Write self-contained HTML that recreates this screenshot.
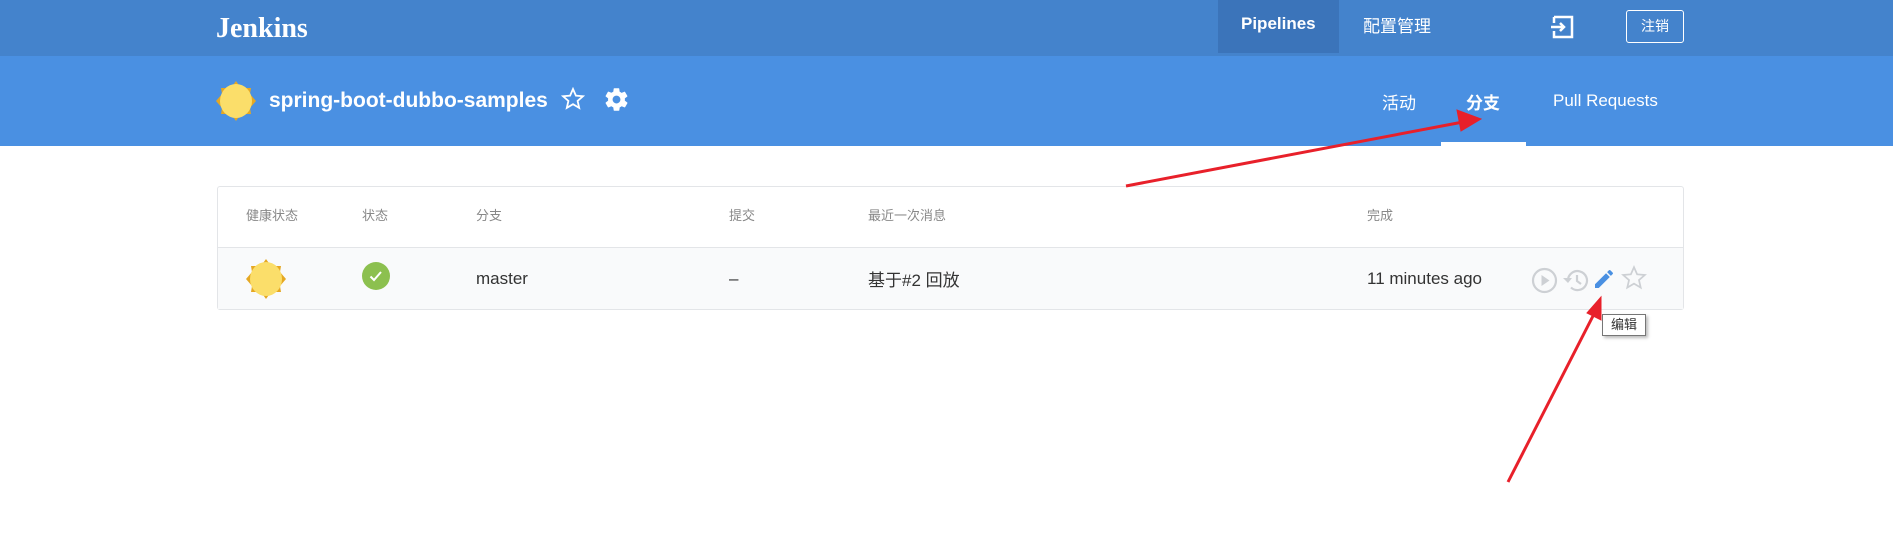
<!DOCTYPE html>
<html><head><meta charset="utf-8"><style>
*{margin:0;padding:0;box-sizing:border-box}
body{width:1893px;height:552px;background:#fff;font-family:"Liberation Sans","Noto Sans CJK SC",sans-serif;position:relative;overflow:hidden}
.a{position:absolute;white-space:nowrap}
#top{position:absolute;left:0;top:0;width:1893px;height:56px;background:#4483cc}
#sub{position:absolute;left:0;top:56px;width:1893px;height:90px;background:#4a90e2}
.h{color:#888;font-size:13px;top:205px}
.r{color:#333;font-size:17px;top:269px}
</style></head><body>
<div id="top"></div><div id="sub"></div>
<div class="a" style="left:216px;top:13px;color:#fff;font-family:'Liberation Serif',serif;font-weight:bold;font-size:28px">Jenkins</div>
<div class="a" style="left:1218px;top:0;width:121px;height:53px;background:#3b74ba"></div>
<div class="a" style="left:1241px;top:14px;color:#fff;font-weight:bold;font-size:17px">Pipelines</div>
<div class="a" style="left:1363px;top:12px;color:#fff;font-size:17px">配置管理</div>
<svg class="a" style="left:1550px;top:14px" width="26" height="26" viewBox="0 0 26 26" fill="none" stroke="#fff" stroke-width="2.5"><path d="M4 3h18v20H4V17M4 9V3M1 13h13M10 9l4 4-4 4"/></svg>
<div class="a" style="left:1626px;top:10px;width:58px;height:33px;border:1px solid #fff;border-radius:3px;color:#fff;font-size:14px;text-align:center;line-height:31px">注销</div>
<svg class="a" style="left:216px;top:81px" width="40" height="40" viewBox="0 0 40 40"><polygon points="20,0 25,7 35,7 34,13 40,20 34,27 35,33 25,33 20,40 15,33 5,33 6,27 0,20 6,13 5,7 15,7" fill="#e5a823"/><ellipse cx="20" cy="20" rx="16" ry="17" fill="#fbde6a"/></svg>
<div class="a" style="left:269px;top:89px;color:#fff;font-weight:bold;font-size:21px">spring-boot-dubbo-samples</div>
<svg class="a" style="left:561px;top:87px" width="24" height="24" viewBox="0 0 24 24" fill="none" stroke="#fff" stroke-width="1.8"><path d="M12 2l2.9 6.6 7.1.6-5.4 4.7 1.6 7L12 17.2 5.8 20.9l1.6-7L2 9.2l7.1-.6z"/></svg>
<svg class="a" style="left:603px;top:86px" width="27" height="27" viewBox="0 0 24 24"><path fill="#fff" d="M19.4 13c.04-.3.06-.6.06-1s-.02-.7-.06-1l2.1-1.6c.2-.15.24-.42.12-.64l-2-3.46c-.12-.22-.39-.3-.61-.22l-2.5 1c-.52-.4-1.08-.73-1.69-.98l-.38-2.65A.49.49 0 0 0 14 2h-4c-.25 0-.46.18-.49.42l-.38 2.65c-.61.25-1.17.59-1.69.98l-2.5-1c-.23-.09-.49 0-.61.22l-2 3.46c-.13.22-.07.49.12.64L4.57 11c-.04.3-.07.6-.07 1s.03.7.07 1l-2.11 1.65c-.19.15-.24.42-.12.64l2 3.46c.12.22.39.3.61.22l2.5-1c.52.4 1.08.73 1.69.98l.38 2.65c.03.24.24.42.49.42h4c.25 0 .46-.18.49-.42l.38-2.65c.61-.25 1.17-.59 1.69-.98l2.5 1c.23.09.49 0 .61-.22l2-3.46c.12-.22.07-.49-.12-.64L19.4 13zM12 15.5A3.5 3.5 0 1 1 12 8.5a3.5 3.5 0 0 1 0 7z"/></svg>
<div class="a" style="left:1382px;top:89px;color:#fff;font-size:17px">活动</div>
<div class="a" style="left:1466px;top:89px;color:#fff;font-size:17px;font-weight:bold">分支</div>
<div class="a" style="left:1553px;top:91px;color:#fff;font-size:17px">Pull Requests</div>
<div class="a" style="left:1441px;top:142px;width:85px;height:4px;background:#fff"></div>
<div class="a" style="left:217px;top:186px;width:1467px;height:124px;border:1px solid #e3e5e8;border-radius:3px;background:#fff"></div>
<div class="a" style="left:218px;top:247px;width:1465px;height:62px;background:#f9fafb;border-top:1px solid #e3e5e8"></div>
<div class="a h" style="left:246px">健康状态</div>
<div class="a h" style="left:362px">状态</div>
<div class="a h" style="left:476px">分支</div>
<div class="a h" style="left:729px">提交</div>
<div class="a h" style="left:868px">最近一次消息</div>
<div class="a h" style="left:1367px">完成</div>
<svg class="a" style="left:246px;top:259px" width="40" height="40" viewBox="0 0 40 40"><polygon points="20,0 25,7 35,7 34,13 40,20 34,27 35,33 25,33 20,40 15,33 5,33 6,27 0,20 6,13 5,7 15,7" fill="#e5a823"/><ellipse cx="20" cy="20" rx="16" ry="17" fill="#fbde6a"/></svg>
<svg class="a" style="left:362px;top:262px" width="28" height="28" viewBox="0 0 28 28"><circle cx="14" cy="14" r="14" fill="#8cc04f"/><path d="M8.5 14.5l3.5 3.5 7-8" fill="none" stroke="#fff" stroke-width="2"/></svg>
<div class="a r" style="left:476px">master</div>
<div class="a r" style="left:729px">–</div>
<div class="a r" style="left:868px;top:266px">基于#2 回放</div>
<div class="a r" style="left:1367px">11 minutes ago</div>
<svg class="a" style="left:1531px;top:267px" width="27" height="27" viewBox="0 0 27 27"><circle cx="13.5" cy="13.5" r="11.5" fill="none" stroke="#cdd0d4" stroke-width="2.2"/><path d="M10.5 8v11l8-5.5z" fill="#cdd0d4"/></svg>
<svg class="a" style="left:1561px;top:267px" width="28" height="27" viewBox="0 0 28 27" fill="none" stroke="#cdd0d4" stroke-width="2.2"><path d="M7 13.5a9.5 9.5 0 1 1 3 7"/><path d="M2 11l5 5 4-5" fill="#cdd0d4" stroke="none"/><path d="M16 8v6l4 3"/></svg>
<svg class="a" style="left:1592px;top:267px" width="24" height="24" viewBox="0 0 24 24"><path fill="#4a90e2" d="M3 17.25V21h3.75L17.8 9.94l-3.75-3.75L3 17.25zM20.7 7.04a1 1 0 0 0 0-1.41l-2.34-2.34a1 1 0 0 0-1.41 0l-1.83 1.83 3.75 3.75 1.83-1.83z"/></svg>
<svg class="a" style="left:1621px;top:265px" width="26" height="26" viewBox="0 0 24 24" fill="none" stroke="#cdd0d4" stroke-width="1.6"><path d="M12 2l2.9 6.6 7.1.6-5.4 4.7 1.6 7L12 17.2 5.8 20.9l1.6-7L2 9.2l7.1-.6z"/></svg>
<div class="a" style="left:1602px;top:314px;width:44px;height:22px;border:1px solid #767676;background:#fff;box-shadow:2px 2px 3px #bbb;font-size:13px;color:#333;text-align:center;line-height:20px">编辑</div>
<svg class="a" style="left:0;top:0" width="1893" height="552"><g fill="#e8202a" stroke="#e8202a"><path d="M1126 186L1463 122" stroke-width="3"/><polygon points="1481,119 1457,110 1461,131"/><path d="M1508 482L1594 314" stroke-width="3"/><polygon points="1601,297 1587,313 1601,320"/></g></svg>
</body></html>
